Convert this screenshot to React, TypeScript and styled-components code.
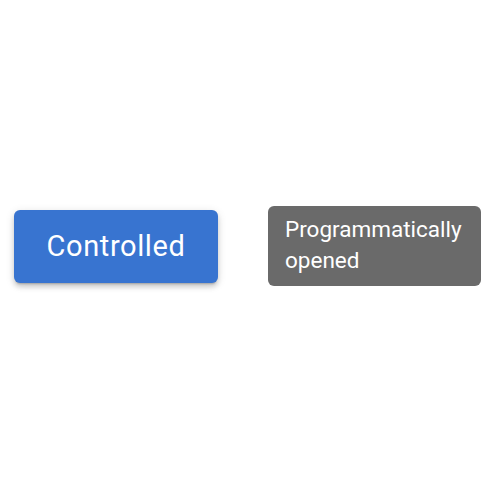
import styled, { createGlobalStyle } from "styled-components";

const GlobalStyle = createGlobalStyle`
  html, body {
    margin: 0;
    padding: 0;
    background: #ffffff;
  }
`;

const Page = styled.div`
  width: 500px;
  height: 500px;
  display: flex;
  align-items: center;
  padding: 0 0 8px 14px;
  gap: 50px;
  box-sizing: border-box;
  font-family: Roboto, "Liberation Sans", sans-serif;
`;

const Button = styled.button`
  width: 204px;
  height: 73px;
  border: none;
  border-radius: 6px;
  background: #3874d0;
  color: #ffffff;
  font: 400 29px/1 Roboto, "Liberation Sans", sans-serif;
  letter-spacing: 0.6px;
  box-shadow: 0px 3px 2px -2px rgba(0, 0, 0, 0.2),
    0px 4px 5px 0px rgba(0, 0, 0, 0.14), 0px 2px 10px 0px rgba(0, 0, 0, 0.12);
  cursor: pointer;
`;

const Tooltip = styled.div`
  width: 213px;
  height: 80px;
  box-sizing: border-box;
  padding: 8px 17px;
  border-radius: 6px;
  background: rgba(97, 97, 97, 0.94);
  color: #ffffff;
  font: 400 22.5px/31px Roboto, "Liberation Sans", sans-serif;
`;

export default function App() {
  return (
    <>
      <GlobalStyle />
      <Page>
        <Button>Controlled</Button>
        <Tooltip>Programmatically opened</Tooltip>
      </Page>
    </>
  );
}
